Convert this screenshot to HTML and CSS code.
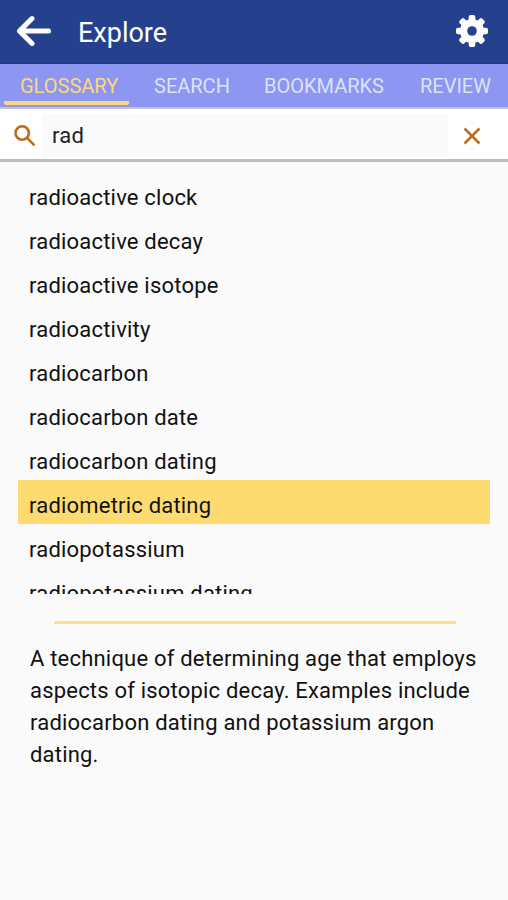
FILE: index.html
```html
<!DOCTYPE html>
<html lang="en">
<head>
  <meta charset="UTF-8">
  <meta name="viewport" content="width=device-width, initial-scale=1.0">
  <title>Explore</title>
  <link rel="stylesheet" href="styles.css">
</head>
<body>

<header class="app-bar">
  <svg class="back" viewBox="0 0 36 32" width="36" height="32">
    <path d="M16 3.6 L3.5 16 L16 28.4 M4 16 H32.5" />
  </svg>
  <h1>Explore</h1>
  <svg class="gear" viewBox="0 0 32 32" width="32" height="32">
    <g fill="#fff">
      <circle cx="16" cy="16" r="12" />
      <rect x="12.7" y="0" width="6.6" height="32" rx="2" />
      <rect x="12.7" y="0" width="6.6" height="32" rx="2" transform="rotate(45 16 16)" />
      <rect x="12.7" y="0" width="6.6" height="32" rx="2" transform="rotate(90 16 16)" />
      <rect x="12.7" y="0" width="6.6" height="32" rx="2" transform="rotate(135 16 16)" />
    </g>
    <circle cx="16" cy="16" r="4.8" fill="#25418e" />
  </svg>
</header>

<nav class="tabs">
  <a class="tab glossary active">GLOSSARY</a>
  <a class="tab search">SEARCH</a>
  <a class="tab bookmarks">BOOKMARKS</a>
  <a class="tab review">REVIEW</a>
</nav>

<div class="search-bar">
  <svg class="lens" viewBox="0 0 22 22" width="22" height="22">
    <circle cx="8.2" cy="8" r="6.7" />
    <path d="M12.8 12.6 L20.5 20.4" />
  </svg>
  <input type="text" class="query" value="rad">
  <svg class="clear" viewBox="0 0 18 18" width="18" height="18">
    <path d="M1.5 1.5 L16.5 16.5 M16.5 1.5 L1.5 16.5" />
  </svg>
</div>

<ul class="terms">
  <li>radioactive clock</li>
  <li>radioactive decay</li>
  <li>radioactive isotope</li>
  <li>radioactivity</li>
  <li>radiocarbon</li>
  <li>radiocarbon date</li>
  <li>radiocarbon dating</li>
  <li class="selected">radiometric dating</li>
  <li>radiopotassium</li>
  <li>radiopotassium dating</li>
</ul>

<hr class="divider">

<p class="definition">A technique of determining age that employs aspects of isotopic decay. Examples include radiocarbon dating and potassium argon dating.</p>

</body>
</html>
```
FILE: styles.css
```css
* {
  margin: 0;
  padding: 0;
  box-sizing: border-box;
}
body {
  background: #fafafa;
  color: #111;
  font-family: Roboto, sans-serif;
  height: 900px;
  overflow: hidden;
}
.app-bar {
  display: flex;
  align-items: center;
  height: 64px;
  padding: 0 20px 2px 16px;
  background: #25418e;
  border-bottom: 1px solid #203a84;
}
.back {
  fill: none;
  stroke: #fff;
  stroke-width: 5;
  stroke-linecap: round;
  stroke-linejoin: round;
}
.app-bar h1 {
  flex: 1;
  padding: 4px 0 0 26px;
  color: #fff;
  font-size: 27px;
  font-weight: 400;
}
.tabs {
  display: flex;
  height: 43px;
  background: #8d96f0;
  white-space: nowrap;
}
.tab {
  height: 41px;
  color: #dbe2fb;
  font-size: 20px;
  line-height: 45px;
}
.glossary {
  width: 125px;
  margin-left: 4px;
  padding-left: 16px;
}
.active {
  color: #fdd67e;
  border-bottom: 4px solid #fdd67e;
  border-radius: 2px;
}
.search {
  margin-left: 25px;
  width: 110px;
}
.bookmarks {
  width: 156px;
}
.search-bar {
  display: flex;
  align-items: center;
  height: 55px;
  padding: 3px 27px 0 14px;
  background: #fff;
  border-top: 2px solid #c4c4c8;
  border-bottom: 3px solid #bdbdbd;
}
.lens,
.clear {
  fill: none;
  stroke: #bb6d1c;
  stroke-width: 2.6;
}
.query {
  width: 406px;
  height: 42px;
  margin: 0 15px 0 6px;
  padding-left: 10px;
  border: none;
  outline: none;
  background: #fafafa;
  color: #222;
  font-family: inherit;
  font-size: 22px;
  letter-spacing: 0.3px;
}
.terms {
  height: 422px;
  margin: 10px 18px 0;
  overflow: hidden;
  list-style: none;
}
.terms li {
  height: 44px;
  padding-left: 11px;
  font-size: 22px;
  line-height: 51px;
  letter-spacing: 0.2px;
}
.terms .selected {
  background: #fedb71;
}
.divider {
  height: 3px;
  margin: 27px 52px 0 54px;
  border: none;
  background: #fbe18a;
}
.definition {
  padding: 19px 20px 0 30px;
  font-size: 22px;
  line-height: 32px;
  letter-spacing: 0.2px;
}
```
